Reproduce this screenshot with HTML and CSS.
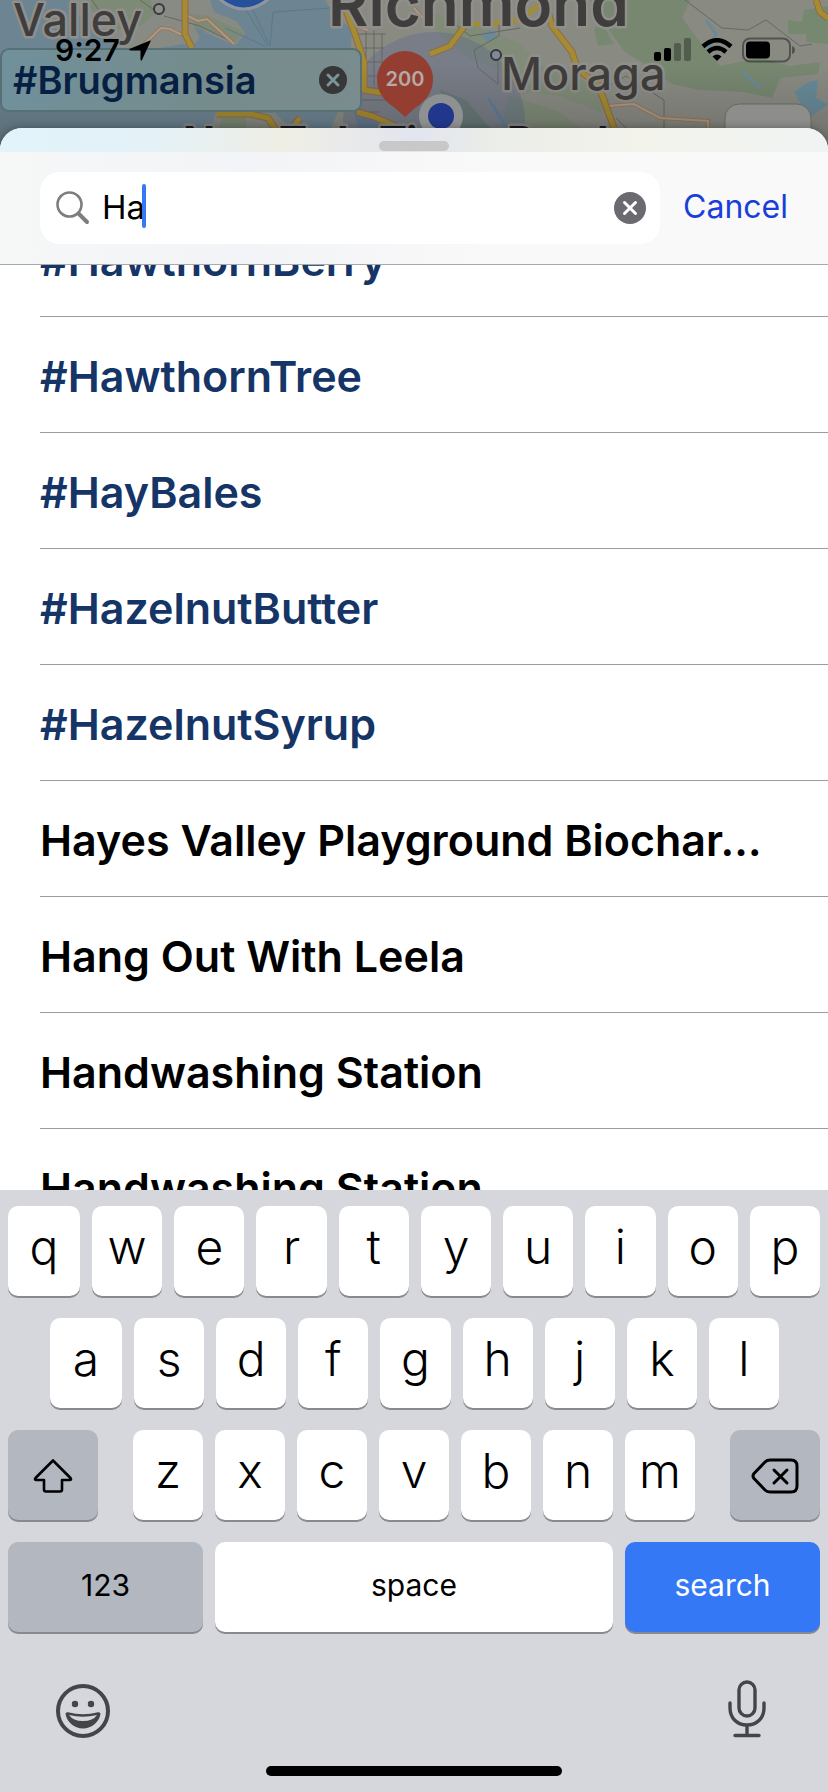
FILE: index.html
```html
<!DOCTYPE html>
<html lang="en">
<head>
  <meta charset="UTF-8">
  <meta name="viewport" content="width=device-width, initial-scale=1.0">
  <title>Search</title>
  <link rel="stylesheet" href="styles.css">
</head>
<body>
  <div class="screen">
    <div class="map">
      <svg class="map-art" viewBox="0 0 828 160" preserveAspectRatio="xMidYMin slice" aria-hidden="true">
        <defs>
          <linearGradient id="shade" x1="0" y1="0" x2="0" y2="1">
            <stop offset="0.4" stop-color="#000" stop-opacity="0"/>
            <stop offset="1" stop-color="#000" stop-opacity="0.22"/>
          </linearGradient>
        </defs>
        <rect width="828" height="160" fill="#6d8592"/>
        <!-- land -->
        <path d="M70 0H210L214 12L236 21L245 33L236 45L222 40L205 32L198 22L194 26L200 38L192 46L182 44L160 48H118L112 38L92 30L80 16Z" fill="#888b83"/>
        <path d="M84 0H150L155 14L140 26L118 30L100 20Z M190 14L208 16L244 32L234 43L214 32L196 28Z" fill="#7c8a76"/>
        <path d="M325 0H828V160H420L405 140L385 128L362 112L358 90L350 60L352 30L334 14Z" fill="#898b83"/>
        <path d="M215 113H275L290 128V160H205Z M338 112H354L360 135L330 130Z" fill="#888b83"/>
        <path d="M222 118H246V134H218Z" fill="#7c8a76"/>
        <path d="M590 0H690L682 18L700 42L720 66L760 58L790 66L820 62L818 74L780 78L772 98L744 92L700 90L672 84L648 66L625 52L606 26Z" fill="#778770"/>
        <path d="M788 20L802 22L804 10L828 6V44L806 42V34H788Z M600 20L614 44L598 46L594 30Z" fill="#768970"/>
        <path d="M420 0L436 14L468 20L520 44L540 64L576 76L610 100L600 112L560 96L520 92L500 70L470 58L440 36Z M510 96L560 112L580 128H500Z" fill="#808b78"/>
        <path d="M440 90L466 100L490 128H462L446 112Z" fill="#74846e"/>
        <path d="M794 92L808 82L818 80L816 98L828 104L812 116L804 108Z M480 36L490 30L498 36L490 42Z" fill="#688a99"/>
        <path d="M488 98L498 114L506 126M706 20L716 34L708 50M742 72L760 88" fill="none" stroke="#688a99" stroke-width="3"/>
        <!-- ferry lines -->
        <path d="M240 0L268 46M250 4L270 46M270 46L273 12L330 8M225 28L265 46" fill="none" stroke="#5c788c" stroke-width="1"/>
        <circle cx="434" cy="123" r="91" fill="#4b5a94" opacity="0.28"/>
        <!-- side streets -->
        <g fill="none" stroke="#696764" stroke-width="1">
          <path d="M92 0L100 12L122 20L130 40M140 0L160 14M164 16L200 26L232 42M366 26V90M374 30V86M382 34V88M356 34H386M360 48H384M360 62H386M362 76H384M364 88H386M362 100H390M366 112H380"/>
          <path d="M499 22V36L474 50L478 68L498 84V60M450 20L470 36L520 28M685 0L722 28L748 30L766 20L800 46L812 44M602 90L626 76L664 100V128M616 118L626 128M440 130L455 136"/>
        </g>
        <!-- secondary roads -->
        <g fill="none" stroke="#9a765f" stroke-width="4">
          <path d="M140 48L161 28L170 29L180 34H188M184 14L198 21L207 19L234 44M348 24L368 30M414 8L428 24M608 106L634 104L660 118L708 121V130"/>
        </g>
        <g fill="none" stroke="#a69b87" stroke-width="2">
          <path d="M140 48L161 28L170 29L180 34H188M184 14L198 21L207 19L234 44M348 24L368 30M414 8L428 24M608 106L634 104L660 118L708 121V130"/>
        </g>
        <!-- highways -->
        <g fill="none" stroke="#94694a" stroke-width="7">
          <path d="M185 0V34L192 48M346 10L355 34L364 62V90L390 94M217 114H250L268 118L276 130M300 118L290 130M357 112L372 116L400 128M430 54L450 46L466 24M545 0L552 26L572 52L578 70L598 84L614 128M816 0L820 12L828 18"/>
        </g>
        <g fill="none" stroke="#a38c31" stroke-width="5">
          <path d="M185 0V34L192 48M346 10L355 34L364 62V90L390 94M217 114H250L268 118L276 130M300 118L290 130M357 112L372 116L400 128M430 54L450 46L466 24H488L520 20L545 0L552 26L572 52L578 70L598 84L614 128M816 0L820 12L828 18"/>
        </g>
        <!-- interstate shield -->
        <path d="M216 -4Q244 22 272 -4Z" fill="#24509c" stroke="#9195a0" stroke-width="3"/>
        <text class="place" x="13" y="36">Valley</text>
        <text class="place place-large" x="328" y="26">Richmond</text>
        <text class="place" x="501" y="90">Moraga</text>
        <text class="place place-city" x="183 279 337 379 406 507 582" y="157">NTkTiPd</text>
        <circle cx="159" cy="9" r="5" fill="#8e8e8b" stroke="#35393b" stroke-width="2"/>
        <circle cx="496" cy="55" r="5" fill="#84879a" stroke="#35393b" stroke-width="2"/>
        <rect width="828" height="160" fill="url(#shade)"/>
        <!-- pin and current location -->
        <path d="M405 117L395 108C384 101 377 92 377 79A28 28 0 0 1 433 79C433 92 426 101 415 108Z" fill="#933e31"/>
        <text class="pin-count" x="405" y="86" text-anchor="middle">200</text>
        <circle cx="441" cy="116" r="22" fill="#8f9091"/>
        <circle cx="441" cy="116" r="13" fill="#20378b"/>
        <rect x="725" y="104" width="86" height="70" rx="14" fill="#8d8e8b" stroke="#646763"/>
      </svg>

      <div class="tag">
        <span>#Brugmansia</span>
        <button class="icon-button" type="button" aria-label="Remove tag">
          <svg width="28" height="28" viewBox="0 0 28 28"><circle cx="14" cy="14" r="14" fill="#373638"/><path d="M9 9L19 19M19 9L9 19" stroke="#7e9496" stroke-width="3" stroke-linecap="round"/></svg>
        </button>
      </div>
    </div>

    <div class="status">
      <span>9:27</span>
      <svg class="status-arrow" width="22" height="22" viewBox="0 0 22 22"><path d="M21 0.5Q22 0 21.500 1.500L13 20Q12 21.500 11.500 19.500V10.500H2Q-1 10 1 8.800Z"/></svg>
      <div class="status-right">
        <svg width="38" height="24" viewBox="0 0 38 24"><rect x="0" y="14" width="7" height="9" rx="2"/><rect x="10" y="10" width="7" height="13" rx="2"/><g opacity="0.3"><rect x="20" y="5" width="7" height="18" rx="2"/><rect x="30" y="0" width="7" height="23" rx="2"/></g></svg>
        <svg width="32" height="24" viewBox="0 0 32 24"><path d="M16 23L11.500 18.500Q16 14.500 20.500 18.500Z"/><path d="M2 8.500Q16 -4 30 8.500M7 14Q16 6 25 14" fill="none" stroke="#000" stroke-width="4.500"/></svg>
        <svg width="54" height="26" viewBox="0 0 54 26"><rect x="1" y="1.500" width="47" height="23" rx="7" fill="none" stroke="#000" stroke-opacity="0.4" stroke-width="2"/><rect x="4" y="4.500" width="24" height="17" rx="4"/><path d="M50 9Q53 10 53 13T50 17Z" opacity="0.4"/></svg>
      </div>
    </div>

    <main class="sheet">
      <div class="grabber-area"><div class="grabber"></div></div>
      <form class="search-bar">
        <div class="field">
          <svg width="34" height="34" viewBox="0 0 34 34" fill="none" stroke="#7e7e82"><circle cx="13.500" cy="13.500" r="12" stroke-width="2.600"/><path d="M22.500 22.500L31 31" stroke-width="4" stroke-linecap="round"/></svg>
          <input class="search-input" type="text" value="Ha" aria-label="Search">
          <span class="caret"></span>
          <button class="icon-button" type="button" aria-label="Clear text">
            <svg width="32" height="32" viewBox="0 0 32 32"><circle cx="16" cy="16" r="16" fill="#6b6a70"/><path d="M10.500 10.500L21.500 21.500M21.500 10.500L10.500 21.500" stroke="#fff" stroke-width="3" stroke-linecap="round"/></svg>
          </button>
        </div>
        <button class="cancel" type="button">Cancel</button>
      </form>

      <div class="results">
        <ul>
          <li class="hashtag">#HawthornBerry</li>
          <li class="hashtag">#HawthornTree</li>
          <li class="hashtag">#HayBales</li>
          <li class="hashtag">#HazelnutButter</li>
          <li class="hashtag">#HazelnutSyrup</li>
          <li>Hayes Valley Playground Biochar…</li>
          <li>Hang Out With Leela</li>
          <li>Handwashing Station</li>
          <li>Handwashing Station</li>
        </ul>
      </div>
    </main>

    <div class="keyboard">
      <div class="keys">
        <button class="key key-first">q</button>
        <button class="key">w</button>
        <button class="key">e</button>
        <button class="key">r</button>
        <button class="key">t</button>
        <button class="key">y</button>
        <button class="key">u</button>
        <button class="key">i</button>
        <button class="key">o</button>
        <button class="key">p</button>
      </div>
      <div class="keys keys-middle">
        <button class="key key-first">a</button>
        <button class="key">s</button>
        <button class="key">d</button>
        <button class="key">f</button>
        <button class="key">g</button>
        <button class="key">h</button>
        <button class="key">j</button>
        <button class="key">k</button>
        <button class="key">l</button>
      </div>
      <div class="keys keys-lower">
        <button class="key key-gray key-side" aria-label="Shift">
          <svg width="40" height="36" viewBox="0 0 40 36" fill="none" stroke="#000" stroke-width="2.600" stroke-linejoin="round"><path d="M20 2.500L37.500 20Q39 22 36.500 22H29V31.500Q29 33.500 27 33.500H13Q11 33.500 11 31.500V22H3.500Q1 22 2.500 20Z"/></svg>
        </button>
        <div class="keys keys-group">
          <button class="key">z</button>
          <button class="key">x</button>
          <button class="key">c</button>
          <button class="key">v</button>
          <button class="key">b</button>
          <button class="key">n</button>
          <button class="key">m</button>
        </div>
        <button class="key key-gray key-side" aria-label="Delete">
          <svg width="48" height="36" viewBox="0 0 48 36" fill="none" stroke="#000" stroke-width="3" stroke-linejoin="round" stroke-linecap="round"><path d="M19 2H40Q46 2 46 8V28Q46 34 40 34H19Q16 34 14 32L3 20.500Q1 18 3 15.500L14 4Q16 2 19 2Z"/><path d="M23 12L36 25M36 12L23 25"/></svg>
        </button>
      </div>
      <div class="keys">
        <button class="key key-word key-gray key-wide">123</button>
        <button class="key key-word">space</button>
        <button class="key key-word key-search key-wide">search</button>
      </div>
      <div class="dock">
        <button class="icon-button" aria-label="Emoji">
          <svg width="54" height="54" viewBox="0 0 54 54"><circle cx="27" cy="27" r="25" fill="none" stroke="#434549" stroke-width="4"/><circle cx="19" cy="20" r="3.200" fill="#434549"/><circle cx="35" cy="20" r="3.200" fill="#434549"/><path d="M9.500 30Q9.500 28 12 28.300Q27 32 42 28.300Q44.500 28 44.500 30C43 38 36 44.500 27 44.500S11 38 9.500 30Z" fill="#434549"/><path d="M13 31Q27 34.500 41 31Q37 37 27 37T13 31Z" fill="#d6d7dc"/></svg>
        </button>
        <button class="icon-button" aria-label="Dictate">
          <svg width="38" height="58" viewBox="0 0 38 58" fill="none" stroke="#434549" stroke-width="3.400" stroke-linecap="round"><rect x="11" y="2" width="16" height="34" rx="8"/><path d="M2 23V28C2 38 9 45 19 45S36 38 36 28V23M19 45V55M7 55.500H31"/></svg>
        </button>
      </div>
      <div class="home-indicator"></div>
    </div>
  </div>
</body>
</html>
```
FILE: styles.css
```css
* {
  box-sizing: border-box;
}
body {
  margin: 0;
  font-family: Inter, "Liberation Sans", sans-serif;
  color: #000;
  background: #fff;
}
button, input {
  font-family: inherit;
  color: inherit;
  border: none;
  padding: 0;
  background: none;
}
svg {
  display: block;
  flex-shrink: 0;
}
.screen {
  position: relative;
  display: flex;
  flex-direction: column;
  height: 100vh;
  overflow: hidden;
}
.icon-button {
  flex-shrink: 0;
}

/* map */
.map {
  position: absolute;
  top: 0;
  left: 0;
  right: 0;
  height: 160px;
  overflow: hidden;
  background: #6d8592;
}
.map-art {
  width: 100%;
  height: 100%;
}
.place {
  font-size: 45px;
  font-weight: 500;
  fill: #403e3c;
  stroke: #908f8c;
  stroke-width: 5px;
  stroke-linejoin: round;
  paint-order: stroke;
}
.place-large {
  font-size: 62px;
  font-weight: 600;
}
.place-city {
  font-size: 42px;
  font-weight: 700;
  fill: #1b1e23;
}
.pin-count {
  font-size: 20px;
  font-weight: 600;
  fill: #b5aaa6;
}
.tag {
  position: absolute;
  top: 48px;
  left: 0;
  display: flex;
  align-items: center;
  justify-content: space-between;
  width: 362px;
  height: 64px;
  padding: 0 13px 0 11px;
  border: 2px solid #567074;
  border-radius: 9px;
  background: linear-gradient(90deg, #70909b, #768c8c 60%, #7a8c8d);
  color: #071f42;
  font-size: 38px;
  font-weight: 600;
}

/* status bar */
.status {
  position: relative;
  display: flex;
  flex-shrink: 0;
  align-items: flex-start;
  height: 128px;
  padding: 32px 32px 0 55px;
  font-size: 30px;
  font-weight: 600;
  line-height: 36px;
}
.status-arrow {
  margin: 8px 0 0 9px;
}
.status-right {
  display: flex;
  align-items: center;
  gap: 9px;
  margin: 5px 0 0 auto;
}

/* sheet */
.sheet {
  position: relative;
  display: flex;
  flex: 1;
  flex-direction: column;
  min-height: 0;
  overflow: hidden;
  border-radius: 22px 22px 0 0;
  background: #fff;
  box-shadow: 0 0 8px rgba(0,0,0,0.3);
}
.grabber-area {
  flex-shrink: 0;
  height: 24px;
  padding-top: 13px;
  background: linear-gradient(90deg, #e2f3fb 0%, #e4f2f8 18%, #efeee5 34%, #e2e5ee 50%, #ebede8 60%, #f3f3ec 78%, #f0f3f3 100%);
}
.grabber {
  width: 70px;
  height: 10px;
  margin: 0 auto;
  border-radius: 5px;
  background: #c8c8c8;
}
.search-bar {
  position: relative;
  z-index: 1;
  display: flex;
  flex-shrink: 0;
  align-items: center;
  gap: 23px;
  height: 113px;
  padding: 0 40px;
  border-bottom: 1px solid #a9a9ab;
  background: linear-gradient(90deg, #f6f7f7, #f3f4f7 30%, #f9f9f9 60%);
}
.field {
  position: relative;
  display: flex;
  flex: 1;
  align-items: center;
  gap: 12px;
  min-width: 0;
  height: 72px;
  padding: 0 14px 0 16px;
  border-radius: 20px;
  background: #fff;
}
.search-input {
  flex: 1;
  min-width: 0;
  height: 44px;
  padding-bottom: 2px;
  font-size: 33px;
  outline: none;
}
.caret {
  position: absolute;
  top: 12px;
  left: 102px;
  width: 4px;
  height: 44px;
  border-radius: 2px;
  background: #3478f6;
}
.cancel {
  padding-bottom: 4px;
  color: #193fd8;
  font-size: 32px;
}

/* results */
.results {
  flex: 1;
  min-height: 0;
  overflow: hidden;
}
.results ul {
  margin: -64px 0 0;
  padding: 0 0 0 40px;
  list-style: none;
}
.results li {
  height: 116px;
  padding-right: 40px;
  border-bottom: 1px solid #9c9c9e;
  overflow: hidden;
  font-size: 43px;
  font-weight: 600;
  line-height: 118px;
  white-space: nowrap;
}
.results .hashtag {
  color: #163567;
}

/* keyboard */
.keyboard {
  position: relative;
  flex-shrink: 0;
  padding: 16px 8px;
  background: #d6d7dc;
}
.keys {
  display: flex;
  gap: 12px;
  margin-bottom: 22px;
}
.keys-middle {
  padding: 0 41px 0 42px;
}
.keys-lower {
  gap: 35px;
}
.keys-group {
  flex: 1;
  margin-bottom: 0;
}
.key {
  display: flex;
  flex: 1;
  align-items: center;
  justify-content: center;
  min-width: 0;
  height: 90px;
  padding-bottom: 10px;
  border-radius: 10px;
  background: #fff;
  box-shadow: 0 2px 0 #898a8d;
  font-size: 48px;
  font-weight: 300;
}
.key-first {
  flex: 0 0 72px;
}
.key-gray {
  background: #b2b7c0;
}
.key-side {
  flex: 0 0 90px;
  padding: 2px 0 0;
}
.key-word {
  padding-bottom: 4px;
  font-size: 30px;
  font-weight: 400;
}
.key-wide {
  flex: 0 0 195px;
}
.key-search {
  background: #3478f6;
  color: #fff;
}
.dock {
  display: flex;
  align-items: flex-end;
  justify-content: space-between;
  margin-top: 48px;
  padding: 0 54px 0 48px;
}
.home-indicator {
  width: 296px;
  height: 10px;
  margin: 28px auto 0;
  border-radius: 5px;
  background: #000;
}
```
